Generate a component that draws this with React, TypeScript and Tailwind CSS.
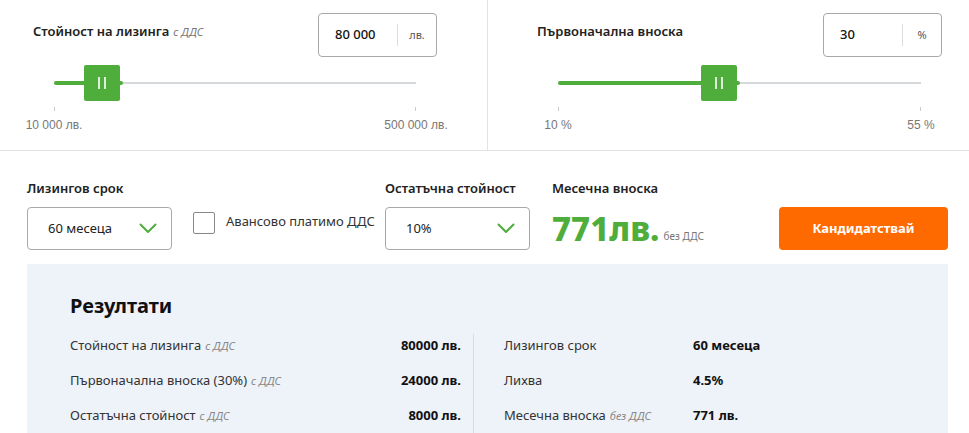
import React from 'react';

const GREEN = 'bg-[#4fad3b]';

interface RangeProps {
  label: string;
  note?: string;
  value: string;
  unit: string;
  min: string;
  max: string;
  handleLeft: number;
}

function RangeField({ label, note, value, unit, min, max, handleLeft }: RangeProps) {
  return (
    <div className="flex flex-col">
      <div className="flex items-start justify-between">
        <div className="mt-[9px] text-[13px] font-semibold text-[#222]">
          {label}
          {note && <span className="ml-1 text-[11px] font-normal italic text-[#777]">{note}</span>}
        </div>
        <div className="flex h-[44px] w-[119px] items-center rounded-[4px] border border-[#a8a8a8]">
          <div className="w-[78px] pl-4 text-[13px] font-medium text-[#111]">{value}</div>
          <div className="h-[22px] w-px bg-[#ddd]" />
          <div className="flex-1 text-center text-[11px] text-[#555]">{unit}</div>
        </div>
      </div>
      <div className="mx-[21px] mt-[8px]">
        <div className="relative h-[36px]">
          <div className="absolute left-0 right-0 top-[18px] h-[2px] -translate-y-1/2 bg-[#d5d9dc]" />
          <div
            className={`absolute left-0 top-[18px] h-[4px] -translate-y-1/2 rounded-full ${GREEN}`}
            style={{ width: handleLeft + 39 }}
          />
          <div
            className={`absolute top-0 flex h-[36px] w-[36px] items-center justify-center gap-[4px] rounded-[2px] ${GREEN}`}
            style={{ left: handleLeft }}
          >
            <span className="h-[12px] w-[2px] bg-white/80" />
            <span className="h-[12px] w-[2px] bg-white/80" />
          </div>
        </div>
        <div className="mt-[6px] flex justify-between">
          <span className="h-[4px] w-px bg-[#ccc]" />
          <span className="h-[4px] w-px bg-[#ccc]" />
        </div>
        <div className="mt-[5px] flex justify-between font-['Liberation_Sans',Arial,sans-serif] text-[12px] text-[#777]">
          <div className="flex w-0 justify-center">
            <span className="whitespace-nowrap">{min}</span>
          </div>
          <div className="flex w-0 justify-center">
            <span className="whitespace-nowrap">{max}</span>
          </div>
        </div>
      </div>
    </div>
  );
}

function Chevron() {
  return (
    <svg width="18" height="11" viewBox="0 0 18 11" fill="none">
      <path d="M1.5 1.5 9 9l7.5-7.5" stroke="#4fad3b" strokeWidth="2" strokeLinecap="round" strokeLinejoin="round" />
    </svg>
  );
}

function SelectBox({ value }: { value: string }) {
  return (
    <div className="flex h-[43px] w-[145px] items-center justify-between rounded-[4px] border border-[#a8a8a8] pl-5 pr-[14px]">
      <span className="text-[13px] text-[#222]">{value}</span>
      <Chevron />
    </div>
  );
}

function ResultRow({ label, note, value, labelWidth }: { label: string; note?: string; value: string; labelWidth?: string }) {
  return (
    <div className="flex h-[35px] items-center text-[13px]">
      <div className={labelWidth ?? 'flex-1'}>
        <span className="text-[#333]">{label}</span>
        {note && <span className="ml-1 text-[11px] italic text-[#888]">{note}</span>}
      </div>
      <div className="font-bold text-[#111]">{value}</div>
    </div>
  );
}

export default function App() {
  return (
    <div className="h-[433px] w-[969px] overflow-hidden bg-white font-['Noto_Sans','Open_Sans',sans-serif]">
      <div className="flex h-[151px] border-b border-[#e3e3e3]">
        <div className="w-[488px] border-r border-[#e3e3e3] pl-[33px] pr-[50px] pt-[13px]">
          <RangeField label="Стойност на лизинга" note="с ДДС" value="80 000" unit="лв." min="10 000 лв." max="500 000 лв." handleLeft={30} />
        </div>
        <div className="flex-1 pl-[49px] pr-[27px] pt-[13px]">
          <RangeField label="Първоначална вноска" value="30" unit="%" min="10 %" max="55 %" handleLeft={143} />
        </div>
      </div>

      <div className="flex pl-[27px] pt-[28px]">
        <div className="w-[166px]">
          <div className="mb-[10px] h-[18px] text-[13px] font-semibold leading-[18px] text-[#222]">Лизингов срок</div>
          <SelectBox value="60 месеца" />
        </div>
        <div className="w-[192px] pt-[33px]">
          <div className="flex items-start gap-[11px]">
            <div className="h-[22px] w-[22px] rounded-[2px] border border-[#888]" />
            <span className="text-[13px] text-[#333]">Авансово платимо ДДС</span>
          </div>
        </div>
        <div className="w-[167px]">
          <div className="mb-[10px] h-[18px] text-[13px] font-semibold leading-[18px] text-[#222]">Остатъчна стойност</div>
          <SelectBox value="10%" />
        </div>
        <div className="w-[227px]">
          <div className="mb-[10px] h-[18px] text-[13px] font-semibold leading-[18px] text-[#222]">Месечна вноска</div>
          <div className="flex h-[43px] items-end pb-[5px]">
            <span className="text-[33px] font-extrabold leading-none text-[#4fad3b]">771лв.</span>
            <span className="mb-[1px] ml-[4px] text-[10px] text-[#777]">без ДДС</span>
          </div>
        </div>
        <div className="pt-[28px]">
          <button className="h-[43px] w-[169px] rounded-[4px] bg-[#ff6a00] text-[13px] font-bold text-white">
            Кандидатствай
          </button>
        </div>
      </div>

      <div className="ml-[27px] mr-[21px] mt-[14px] h-[200px] bg-[#eef2f9] pl-[43px] pt-[28px]">
        <h2 className="mb-[8px] text-[20px] font-bold leading-[28px] text-[#111]">Резултати</h2>
        <div className="flex">
          <div className="w-[391px]">
            <ResultRow label="Стойност на лизинга" note="с ДДС" value="80000 лв." />
            <ResultRow label="Първоначална вноска (30%)" note="с ДДС" value="24000 лв." />
            <ResultRow label="Остатъчна стойност" note="с ДДС" value="8000 лв." />
          </div>
          <div className="ml-[12px] mt-[6px] w-px bg-[#d8dbe0]" />
          <div className="pl-[30px]">
            <ResultRow label="Лизингов срок" value="60 месеца" labelWidth="w-[189px]" />
            <ResultRow label="Лихва" value="4.5%" labelWidth="w-[189px]" />
            <ResultRow label="Месечна вноска" note="без ДДС" value="771 лв." labelWidth="w-[189px]" />
          </div>
        </div>
      </div>
    </div>
  );
}
